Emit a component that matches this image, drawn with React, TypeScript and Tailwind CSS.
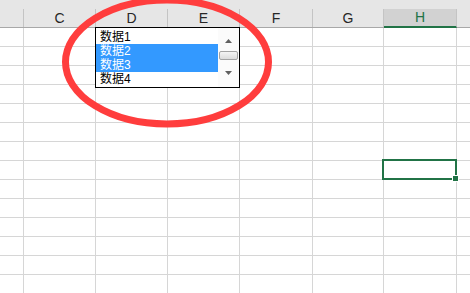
const cols = [
  { label: "", w: "w-[24px]" },
  { label: "C", w: "w-[72px]" },
  { label: "D", w: "w-[72px]" },
  { label: "E", w: "w-[72px]" },
  { label: "F", w: "w-[73px]" },
  { label: "G", w: "w-[71px]" },
  { label: "H", w: "w-[73px]", active: true },
  { label: "", w: "w-[40px]" },
];

const rows = Array.from({ length: 14 }, (_, i) => i);
const items = ["数据1", "数据2", "数据3", "数据4"];
const selected = [1, 2];

function ListBox() {
  return (
    <div className="absolute left-[95px] top-[27px] w-[145px] h-[61px] border border-black bg-white flex">
      <div className="w-[122px] pt-[2px]">
        {items.map((t, i) => (
          <div
            key={t}
            className={
              "h-[14px] leading-[14px] pl-[4px] text-[12px] " +
              (selected.includes(i) ? "bg-[#3399ff] text-white" : "text-black")
            }
          >
            {t}
          </div>
        ))}
      </div>
      <div className="w-[21px] bg-[#fbfbfb] flex flex-col items-center">
        <svg width="9" height="6" viewBox="0 0 9 6" className="mt-[10px]">
          <path d="M4.5 1 L8 5 L1 5 Z" fill="#606060" />
        </svg>
        <div className="mt-[7px] w-[19px] h-[9px] rounded-[2px] border border-[#a3a3a3] bg-gradient-to-b from-[#f4f4f4] to-[#dcdcdc]" />
        <svg width="9" height="6" viewBox="0 0 9 6" className="mt-[10px]">
          <path d="M1 1 L8 1 L4.5 5 Z" fill="#606060" />
        </svg>
      </div>
    </div>
  );
}

export default function App() {
  return (
    <div
      className="relative w-[470px] h-[293px] overflow-hidden bg-white"
      style={{ fontFamily: '"Liberation Sans", "Noto Sans CJK SC", sans-serif' }}
    >
      <div className="flex items-end h-[28px] bg-[#e6e6e6] border-b border-[#a8a8a8]">
        {cols.map((c, i) => (
          <div
            key={i}
            className={
              "shrink-0 h-[18px] flex items-center justify-center text-[14px] border-r border-[#c4c4c4] " +
              c.w +
              (c.active
                ? " bg-[#d2d2d2] text-[#217346] border-b-2 border-b-[#217346] -mb-[1px] h-[19px]"
                : " text-[#262626]")
            }
          >
            {c.label}
          </div>
        ))}
      </div>
      {rows.map((r) => (
        <div key={r} className="flex h-[19px] border-b border-[#d6d6d6]">
          {cols.map((c, i) => (
            <div key={i} className={"shrink-0 border-r border-[#d6d6d6] " + c.w} />
          ))}
        </div>
      ))}

      <div className="absolute left-[382px] top-[159px] w-[75px] h-[21px] border-2 border-[#217346]" />
      <div className="absolute left-[452px] top-[175px] w-[7px] h-[7px] bg-[#217346] border border-white" />

      <ListBox />

      <svg className="absolute inset-0 pointer-events-none" width="470" height="293">
        <ellipse cx="167" cy="62" rx="101.5" ry="62" fill="none" stroke="#ff3d3d" strokeWidth="7" />
      </svg>
    </div>
  );
}
